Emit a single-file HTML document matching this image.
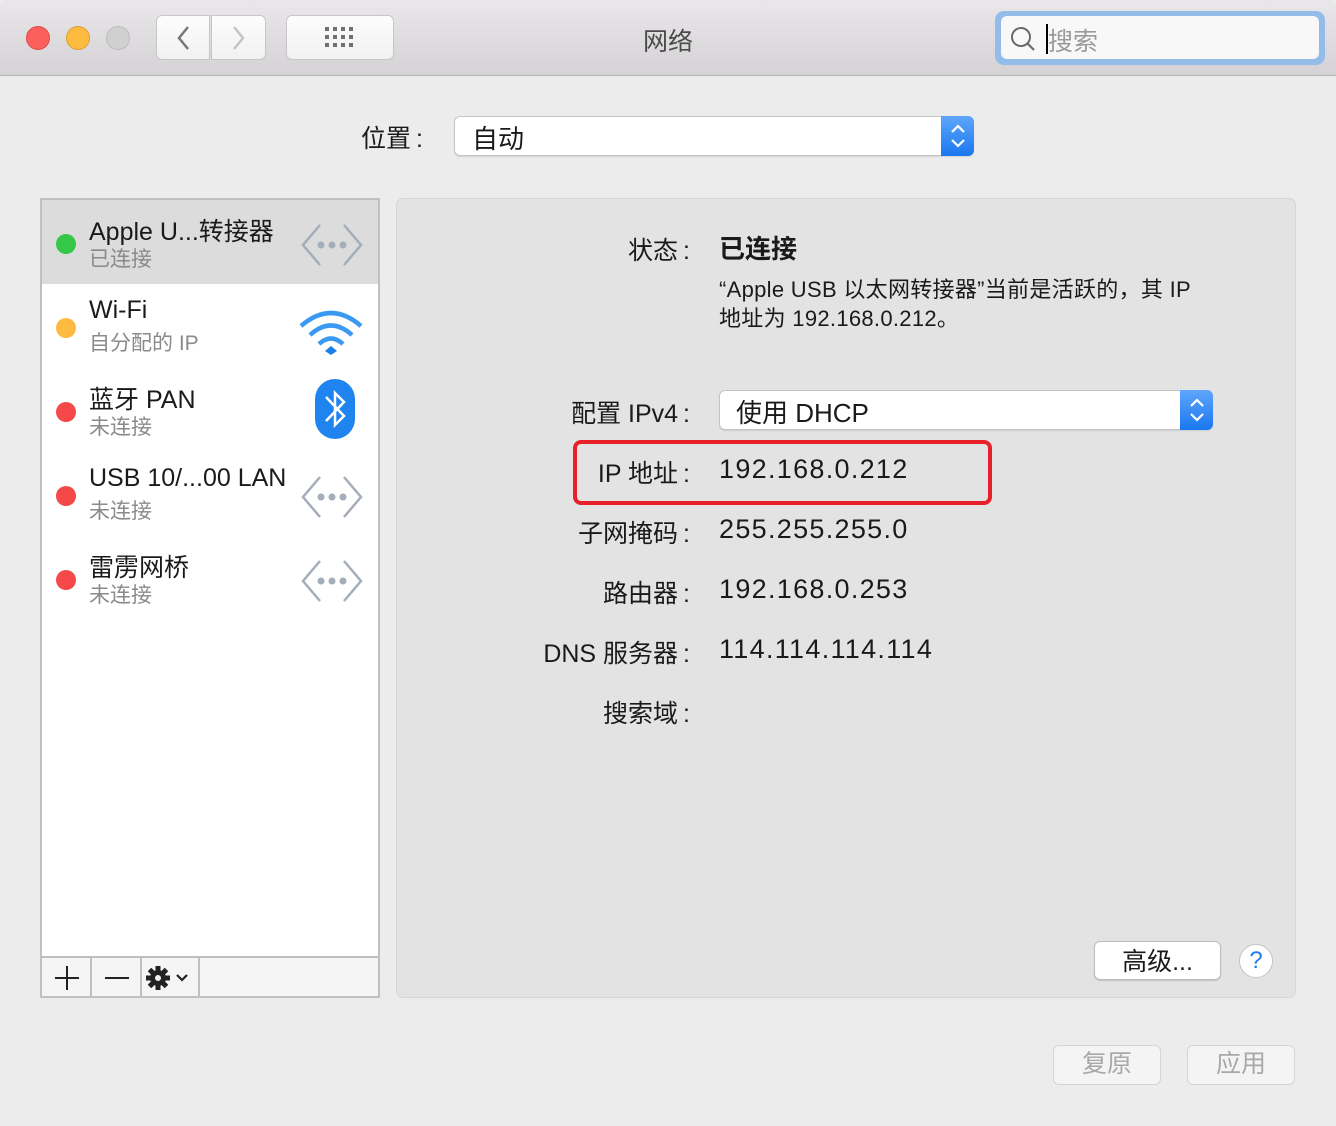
<!DOCTYPE html>
<html><head><meta charset="utf-8"><style>
*{margin:0;padding:0;box-sizing:border-box}
body{width:1336px;height:1126px;background:#ececec;font-family:"Liberation Sans","Noto Sans CJK SC",sans-serif;color:#1a1a1a;position:relative;overflow:hidden}
.a{position:absolute}
.tb{left:0;top:0;width:1336px;height:76px;background:linear-gradient(#e9e7e9,#d4d2d4);border-bottom:1px solid #b3b3b3;border-radius:8px 8px 0 0}
.dot{width:24px;height:24px;border-radius:50%}
.btn{background:linear-gradient(#fdfdfd,#f1f1f1);border:1px solid #c6c6c6;border-radius:6px}
.lab{right:646px;font-size:25px;text-align:right;white-space:nowrap}
.c{margin-left:5px}
.val{left:719px;font-size:27px;letter-spacing:1.3px;white-space:nowrap}
.row{left:42px;width:336px;height:84px}
.row .d{position:absolute;left:14px;top:34px;width:20px;height:20px;border-radius:50%}
.row .t{position:absolute;left:47px;top:12px;font-size:25px;white-space:nowrap}
.row .s{position:absolute;left:47px;top:43px;font-size:21px;color:#8a8a8a;white-space:nowrap}
.row svg{position:absolute;right:14px;top:22px}
</style></head><body>
<div class="a tb"></div>
<div class="a dot" style="left:26px;top:26px;background:#fc605c;border:1px solid #de4a46"></div>
<div class="a dot" style="left:66px;top:26px;background:#fdbc40;border:1px solid #de9f34"></div>
<div class="a dot" style="left:106px;top:26px;background:#d0d0d0;border:1px solid #bcbcbc"></div>
<div class="a btn" style="left:156px;top:15px;width:54px;height:45px;border-radius:6px 0 0 6px"></div>
<div class="a btn" style="left:211px;top:15px;width:55px;height:45px;border-radius:0 6px 6px 0"></div>
<svg class="a" style="left:174px;top:25px" width="20" height="26"><path d="M14 2 L5 13 L14 24" fill="none" stroke="#777" stroke-width="2.5"/></svg>
<svg class="a" style="left:229px;top:25px" width="20" height="26"><path d="M5 2 L14 13 L5 24" fill="none" stroke="#c4c4c4" stroke-width="2.5"/></svg>
<div class="a btn" style="left:286px;top:15px;width:108px;height:45px"></div>
<svg class="a" style="left:325px;top:27px" width="30" height="22" fill="#707070">
<rect x="0" y="0" width="4" height="4"/><rect x="8" y="0" width="4" height="4"/><rect x="16" y="0" width="4" height="4"/><rect x="24" y="0" width="4" height="4"/>
<rect x="0" y="8" width="4" height="4"/><rect x="8" y="8" width="4" height="4"/><rect x="16" y="8" width="4" height="4"/><rect x="24" y="8" width="4" height="4"/>
<rect x="0" y="16" width="4" height="4"/><rect x="8" y="16" width="4" height="4"/><rect x="16" y="16" width="4" height="4"/><rect x="24" y="16" width="4" height="4"/></svg>
<div class="a" style="left:0;width:1336px;top:22px;text-align:center;font-size:25px;color:#4a4a4a">网络</div>
<div class="a" style="left:995px;top:11px;width:330px;height:54px;border-radius:9px;background:#93bde8"></div>
<div class="a" style="left:1001px;top:16px;width:318px;height:43px;border-radius:6px;background:#f8f8f8"></div>
<svg class="a" style="left:1010px;top:26px" width="26" height="26"><circle cx="11" cy="11" r="9" fill="none" stroke="#6a6a6a" stroke-width="2"/><path d="M17.5 17.5 L24 24" stroke="#6a6a6a" stroke-width="2.2"/></svg>
<div class="a" style="left:1046px;top:24px;width:2px;height:30px;background:#000"></div>
<div class="a" style="left:1048px;top:22px;font-size:25px;color:#9a9a9a">搜索</div>

<div class="a" style="left:361px;top:119px;font-size:25px">位置<span class="c">:</span></div>
<div class="a" style="left:454px;top:116px;width:520px;height:40px;background:#fff;border:1px solid #c4c4c4;border-radius:6px;box-shadow:0 1px 1px rgba(0,0,0,.1)"></div>
<div class="a" style="left:472px;top:119px;font-size:26px">自动</div>
<div class="a" style="left:941px;top:116px;width:33px;height:40px;background:linear-gradient(#5ea6fa,#1a77f0);border-radius:0 6px 6px 0"></div>
<svg class="a" style="left:947px;top:121px" width="22" height="30"><path d="M5 11 L11 5 L17 11 M5 19 L11 25 L17 19" fill="none" stroke="#fff" stroke-width="2.2"/></svg>

<div class="a" style="left:40px;top:198px;width:340px;height:800px;background:#fff;border:2px solid #c0c0c0"></div>
<div class="a row" style="top:200px;background:#dcdcdc"><div class="d" style="background:#34c748"></div><div class="t">Apple U...转接器</div><div class="s">已连接</div>
<svg width="64" height="46"><path d="M20 3 L3 23 L20 43 M44 3 L61 23 L44 43" fill="none" stroke="#a5adba" stroke-width="2.5"/><circle cx="21" cy="23" r="3.5" fill="#a5adba"/><circle cx="32" cy="23" r="3.5" fill="#a5adba"/><circle cx="43" cy="23" r="3.5" fill="#a5adba"/></svg></div>
<div class="a row" style="top:284px"><div class="d" style="background:#fdbb3f"></div><div class="t">Wi-Fi</div><div class="s">自分配的 IP</div>
<svg width="66" height="50"><path d="M3 20 Q33 -6 63 20" fill="none" stroke="#3a9af2" stroke-width="4.5"/><path d="M12 29 Q33 10 54 29" fill="none" stroke="#3a9af2" stroke-width="4.5"/><path d="M21 38 Q33 27 45 38" fill="none" stroke="#3a9af2" stroke-width="4.5"/><path d="M27 45 L33 40 L39 45 L33 49Z" fill="#1c7fe6"/></svg></div>
<div class="a row" style="top:368px"><div class="d" style="background:#f54848"></div><div class="t">蓝牙 PAN</div><div class="s">未连接</div>
<svg width="42" height="62" style="right:22px;top:10px"><rect x="1" y="1" width="40" height="60" rx="20" fill="#1f84f0"/><path d="M12 19 L30 38 L21 47 L21 15 L30 24 L12 43" fill="none" stroke="#fff" stroke-width="2.5"/></svg></div>
<div class="a row" style="top:452px"><div class="d" style="background:#f54848"></div><div class="t">USB 10/...00 LAN</div><div class="s">未连接</div>
<svg width="64" height="46"><path d="M20 3 L3 23 L20 43 M44 3 L61 23 L44 43" fill="none" stroke="#a5adba" stroke-width="2.5"/><circle cx="21" cy="23" r="3.5" fill="#a5adba"/><circle cx="32" cy="23" r="3.5" fill="#a5adba"/><circle cx="43" cy="23" r="3.5" fill="#a5adba"/></svg></div>
<div class="a row" style="top:536px"><div class="d" style="background:#f54848"></div><div class="t">雷雳网桥</div><div class="s">未连接</div>
<svg width="64" height="46"><path d="M20 3 L3 23 L20 43 M44 3 L61 23 L44 43" fill="none" stroke="#a5adba" stroke-width="2.5"/><circle cx="21" cy="23" r="3.5" fill="#a5adba"/><circle cx="32" cy="23" r="3.5" fill="#a5adba"/><circle cx="43" cy="23" r="3.5" fill="#a5adba"/></svg></div>
<div class="a" style="left:42px;top:956px;width:336px;height:40px;background:#f5f5f5;border-top:2px solid #c0c0c0"></div>
<div class="a" style="left:90px;top:956px;width:2px;height:40px;background:#c0c0c0"></div>
<div class="a" style="left:140px;top:956px;width:2px;height:40px;background:#c0c0c0"></div>
<div class="a" style="left:198px;top:956px;width:2px;height:40px;background:#c0c0c0"></div>
<svg class="a" style="left:54px;top:965px" width="26" height="26"><path d="M13 1 V25 M1 13 H25" stroke="#222" stroke-width="2"/></svg>
<svg class="a" style="left:104px;top:965px" width="26" height="26"><path d="M1 13 H25" stroke="#222" stroke-width="2"/></svg>
<svg class="a" style="left:145px;top:964px" width="48" height="30"><g transform="translate(13 14)" fill="#222"><circle r="8"/><g stroke="#222" stroke-width="5"><path d="M0 -12 V12 M-12 0 H12 M-8.5 -8.5 L8.5 8.5 M-8.5 8.5 L8.5 -8.5"/></g><circle r="3" fill="#f5f5f5"/></g><path d="M32 11 L37 16 L42 11" fill="none" stroke="#222" stroke-width="2.2"/></svg>

<div class="a" style="left:396px;top:198px;width:900px;height:800px;background:#e3e3e3;border:1px solid #d6d6d6;border-radius:7px"></div>
<div class="a lab" style="top:231px">状态<span class="c">:</span></div>
<div class="a" style="left:719px;top:229px;font-size:26px;font-weight:bold">已连接</div>
<div class="a" style="left:719px;top:275px;font-size:22px;line-height:29px;width:520px;letter-spacing:0.3px">“Apple USB 以太网转接器”当前是活跃的，其 IP<br>地址为 192.168.0.212。</div>
<div class="a lab" style="top:394px">配置 IPv4<span class="c">:</span></div>
<div class="a" style="left:719px;top:390px;width:494px;height:40px;background:#fff;border:1px solid #c4c4c4;border-radius:6px;box-shadow:0 1px 1px rgba(0,0,0,.1)"></div>
<div class="a" style="left:736px;top:393px;font-size:26px">使用 DHCP</div>
<div class="a" style="left:1180px;top:390px;width:33px;height:40px;background:linear-gradient(#5ea6fa,#1a77f0);border-radius:0 6px 6px 0"></div>
<svg class="a" style="left:1186px;top:395px" width="22" height="30"><path d="M5 11 L11 5 L17 11 M5 19 L11 25 L17 19" fill="none" stroke="#fff" stroke-width="2.2"/></svg>
<div class="a" style="left:573px;top:440px;width:419px;height:65px;border:4px solid #e8202a;border-radius:8px"></div>
<div class="a lab" style="top:454px">IP 地址<span class="c">:</span></div>
<div class="a val" style="top:454px">192.168.0.212</div>
<div class="a lab" style="top:514px">子网掩码<span class="c">:</span></div>
<div class="a val" style="top:514px">255.255.255.0</div>
<div class="a lab" style="top:574px">路由器<span class="c">:</span></div>
<div class="a val" style="top:574px">192.168.0.253</div>
<div class="a lab" style="top:634px">DNS 服务器<span class="c">:</span></div>
<div class="a val" style="top:634px">114.114.114.114</div>
<div class="a lab" style="top:694px">搜索域<span class="c">:</span></div>
<div class="a btn" style="left:1094px;top:941px;width:127px;height:39px;background:#fff;border-color:#bdbdbd;box-shadow:0 1px 1px rgba(0,0,0,.15)"></div>
<div class="a" style="left:1094px;top:942px;width:127px;text-align:center;font-size:25px">高级...</div>
<div class="a" style="left:1239px;top:944px;width:34px;height:34px;border-radius:50%;background:#fff;border:1px solid #c4c4c4;text-align:center;font-size:24px;line-height:32px;color:#1e7ff0">?</div>
<div class="a" style="left:1053px;top:1045px;width:108px;height:40px;border:1px solid #d5d5d5;border-radius:6px;background:#f4f4f4;text-align:center;font-size:25px;line-height:37px;color:#a8a8a8">复原</div>
<div class="a" style="left:1187px;top:1045px;width:108px;height:40px;border:1px solid #d5d5d5;border-radius:6px;background:#f4f4f4;text-align:center;font-size:25px;line-height:37px;color:#a8a8a8">应用</div>
</body></html>
